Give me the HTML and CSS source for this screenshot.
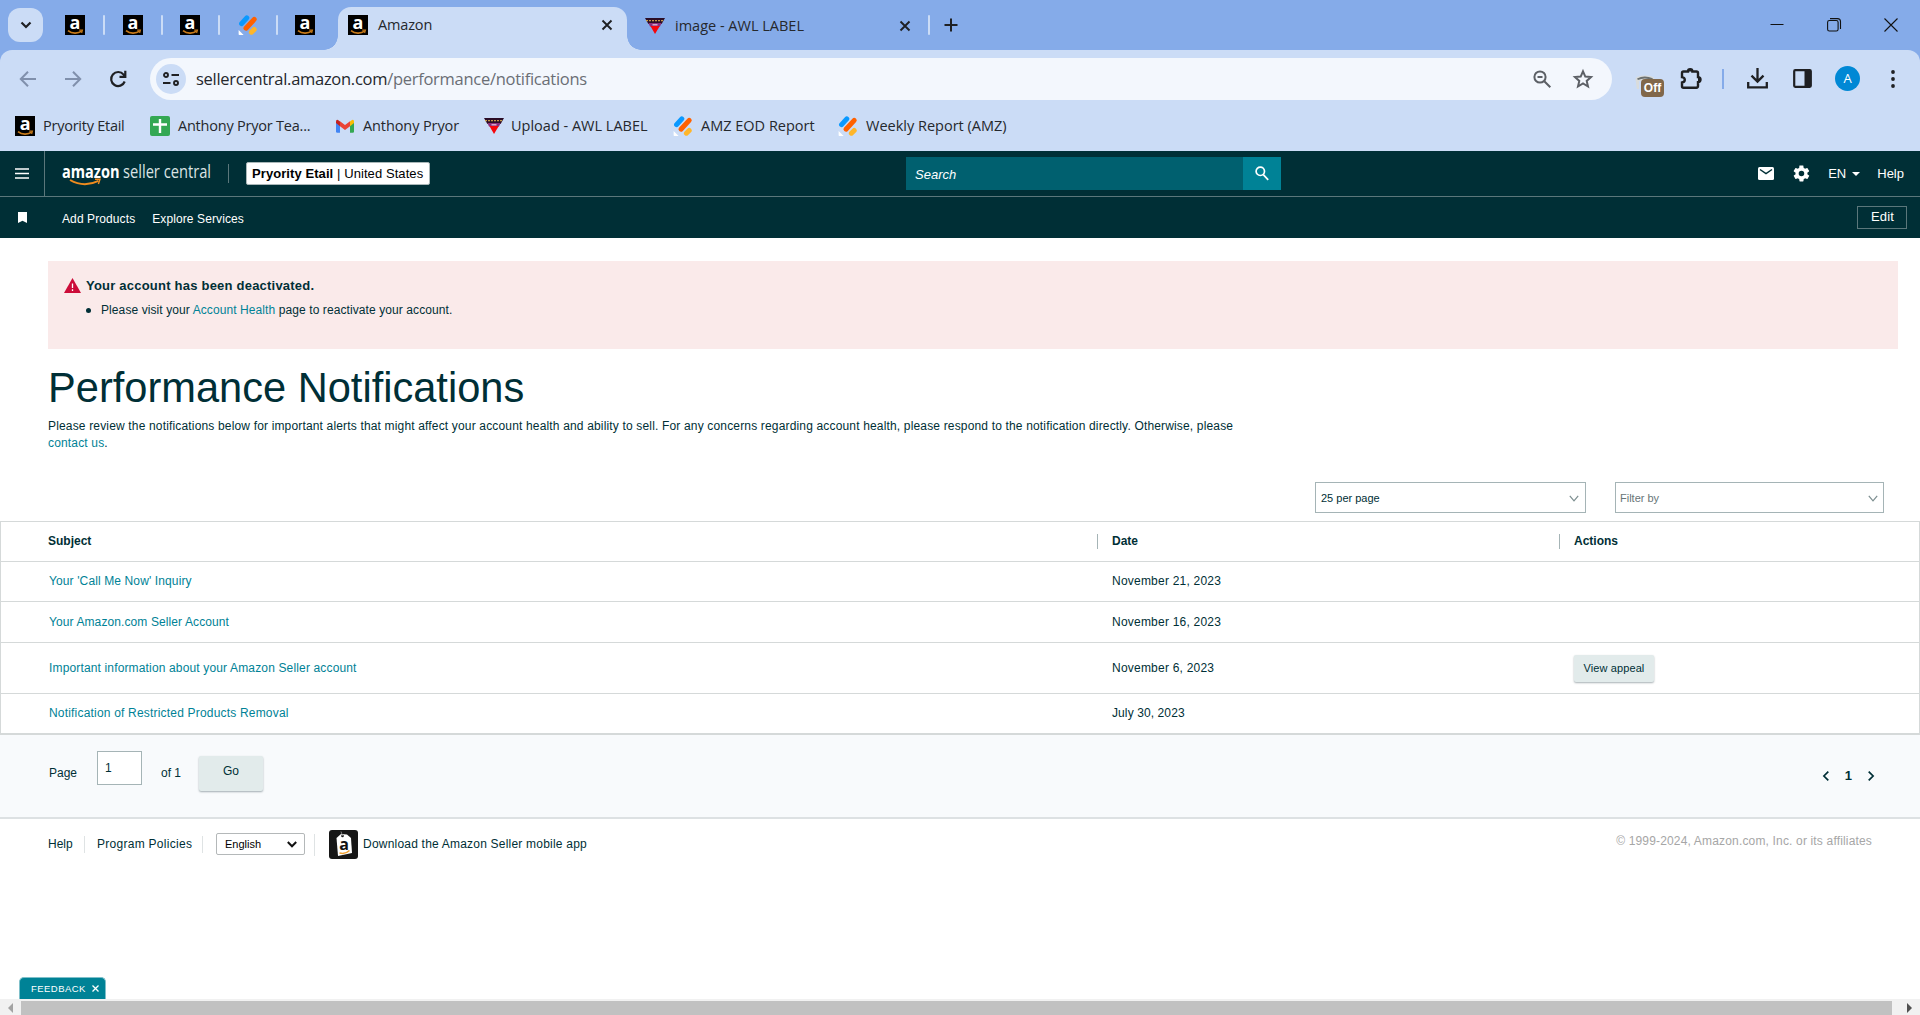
FILE: index.html
```html
<!DOCTYPE html>
<html lang="en">
<head>
<meta charset="utf-8">
<title>Amazon</title>
<link rel="stylesheet" href="styles.css">
</head>
<body>
<svg class="defs" aria-hidden="true">
  <symbol id="fav-amazon" viewBox="0 0 20 20">
    <rect width="20" height="20" fill="#000"/>
    <text x="10" y="14.2" text-anchor="middle" class="fav-letter">a</text>
    <path d="M3 15.600c4 3.200 10 3.200 13.600.5" fill="none" stroke="#c77a1a" stroke-width="1.700"/>
    <path d="M14.200 15.200h3.200l-.8 2.800" fill="none" stroke="#c77a1a" stroke-width="1.200"/>
  </symbol>
  <symbol id="fav-jot" viewBox="0 0 20 20">
    <g fill="none" stroke-linecap="round" stroke-width="5">
      <path d="M3.600 8.600 8.800 2.800" stroke="#0a99ff"/>
      <path d="M8 13.200 16.200 4.400" stroke="#ff6100"/>
      <path d="M13.400 17.200 16.200 14.400" stroke="#ffb629"/>
    </g>
    <path d="M.6 15v4.200q0 .8.8.8h4.200z" fill="#fff"/>
  </symbol>
  <symbol id="fav-awl" viewBox="0 0 20 20">
    <path d="M0 2h20l-3.400 6H3.400z" fill="#2b0d26"/>
    <path d="M1 4.600h18" stroke="#c69a4c" stroke-width="1.400" stroke-dasharray="2 1"/>
    <path d="M3.400 7h13.200L15 10.500H5z" fill="#8a2f7c"/>
    <path d="M5.400 10h9.400L10 18z" fill="#f5060c"/>
    <path d="M7.500 8.800h5" stroke="#e9c6dd" stroke-width="1.200"/>
  </symbol>
  <symbol id="i-x" viewBox="0 0 12 12"><path d="m1.500 1.500 9 9m0-9-9 9" fill="none" stroke="#1f2023" stroke-width="1.900"/></symbol>
</svg>

<header class="browser">
  <div class="tabs">
    <div class="tab-search"><svg width="12" height="8" viewBox="0 0 12 8"><path d="m1.500 1.500 4.500 4.500 4.500-4.500" fill="none" stroke="#1f2023" stroke-width="2.200"/></svg></div>
    <div class="pinned">
      <svg class="fav"><use href="#fav-amazon"/></svg><i class="sep"></i>
      <svg class="fav"><use href="#fav-amazon"/></svg><i class="sep"></i>
      <svg class="fav"><use href="#fav-amazon"/></svg><i class="sep"></i>
      <svg class="fav"><use href="#fav-jot"/></svg><i class="sep"></i>
      <svg class="fav"><use href="#fav-amazon"/></svg>
    </div>
    <div class="tab active">
      <svg class="fav"><use href="#fav-amazon"/></svg><span class="tab-title">Amazon</span>
      <svg class="close"><use href="#i-x"/></svg>
    </div>
    <div class="tab second">
      <svg class="fav"><use href="#fav-awl"/></svg><span class="tab-title">image - AWL LABEL</span>
      <svg class="close"><use href="#i-x"/></svg>
    </div>
    <i class="sep last"></i>
    <svg class="plus" viewBox="0 0 14 14"><path d="M7 .5v13M.5 7h13" stroke="#1f2023" stroke-width="2"/></svg>
    <div class="window-buttons">
      <svg width="14" height="14" viewBox="0 0 14 14"><path d="M.5 6.500h13" stroke="#111" fill="none"/></svg>
      <svg width="14" height="14" viewBox="0 0 14 14"><g fill="none" stroke="#111" stroke-width="1.100"><rect x=".6" y="2.500" width="10.500" height="10.500" rx="1.800"/><path d="M3 .6h7.500q3 0 3 3V11"/></g></svg>
      <svg width="14" height="14" viewBox="0 0 14 14"><path d="m.5.5 13 13m0-13-13 13" stroke="#111" stroke-width="1.100"/></svg>
    </div>
  </div>

  <div class="toolbar">
    <svg class="nav" viewBox="0 0 18 18"><path d="M17 9H2m7-7.200L1.800 9 9 16.200" fill="none" stroke="#8090ac" stroke-width="2"/></svg>
    <svg class="nav" viewBox="0 0 18 18"><path d="M1 9h15M9 1.800 16.200 9 9 16.200" fill="none" stroke="#8090ac" stroke-width="2"/></svg>
    <svg class="nav" viewBox="0 0 18 18"><path d="M15.700 11.500A7 7 0 1 1 14.600 4.600L16 6.500M16.300.8v6H10.500" fill="none" stroke="#1f2023" stroke-width="2.200"/></svg>
    <div class="omnibox">
      <span class="site"><svg width="16" height="14" viewBox="0 0 16 14"><g fill="none" stroke="#1f2023" stroke-width="1.900"><circle cx="3" cy="3" r="2"/><path d="M8.500 3H16M0 11h7.500"/><circle cx="13" cy="11" r="2"/></g></svg></span>
      <span class="url">sellercentral.amazon.com<span class="path">/performance/notifications</span></span>
      <svg class="zoomout" viewBox="0 0 18 18"><g fill="none" stroke="#5c6066" stroke-width="2"><circle cx="7" cy="7" r="5.600"/><path d="m11.300 11.300 6 6M4.500 7h5"/></g></svg>
      <svg class="star" viewBox="0 0 20 20"><path d="m10 2.300 2.300 5.300 5.700.5-4.300 3.800 1.300 5.600-5-3-5 3 1.300-5.600L2 8.100l5.700-.5z" fill="none" stroke="#5c6066" stroke-width="2"/></svg>
    </div>
    <div class="ext">
      <svg width="20" height="15" viewBox="0 0 20 15"><path d="M.5 4Q1 .5 10 .5t9.500 3.500V6H4v8H1.800z" fill="#d9dcdc"/><path d="M2.500 4.200q7-3.400 15 0" stroke="#6b7070" stroke-width="1.800" fill="none"/></svg>
      <span class="off">Off</span>
    </div>
    <svg class="puzzle" viewBox="0 0 22 22"><path d="M2 5q0-1.500 1.500-1.500H8a2.200 2.200 0 0 1 4.400 0h4q1.600 0 1.600 1.600v4a2.500 2.500 0 0 1 0 5v4q0 1.600-1.600 1.600H3.500Q2 19.700 2 18.200v-3.700q2.800-.4 2.800-2.700T2 9.100z" fill="none" stroke="#1f2023" stroke-width="2.400"/><path d="M7.500 3.500a2.700 2.700 0 0 1 5.400 0zM18 9a2.700 2.700 0 0 1 0 5.400z" fill="#1f2023"/></svg>
    <i class="bar"></i>
    <svg class="download" viewBox="0 0 21 21"><path d="M10.500 0v13M4.500 7.600l6 6 6-6M1.200 14v5.400h18.600V14" fill="none" stroke="#1f2023" stroke-width="2.300"/></svg>
    <svg class="panel" viewBox="0 0 19 19"><rect x="1.200" y="1.200" width="16.600" height="16.600" rx="1" fill="none" stroke="#1f2023" stroke-width="2.200"/><path d="M11.500 1h6.500v17h-6.500z" fill="#1f2023"/></svg>
    <span class="avatar">A</span>
    <svg class="dots" viewBox="0 0 4 18"><g fill="#1f2023"><circle cx="2" cy="2" r="1.900"/><circle cx="2" cy="9" r="1.900"/><circle cx="2" cy="16" r="1.900"/></g></svg>
  </div>

  <div class="bookmarks">
    <a class="bm b1"><svg class="fav"><use href="#fav-amazon"/></svg><span>Pryority Etail</span></a>
    <a class="bm b2"><svg class="fav" viewBox="0 0 20 20"><rect width="20" height="20" rx="2" fill="#34a853"/><path d="M10 3v14M3 8.500h14" stroke="#fff" stroke-width="2.400"/></svg><span>Anthony Pryor Tea...</span></a>
    <a class="bm b3"><svg class="fav" viewBox="0 0 20 20"><path d="M1 6v9.500q0 1.200 1.200 1.200H5V8z" fill="#4285f4"/><path d="M19 6v9.500q0 1.200-1.200 1.200H15V8z" fill="#34a853"/><path d="M15 5.500 17 4q2-.8 2 1.800V7l-4 3.200z" fill="#fbbc04"/><path d="M5 5.500 3 4Q1 3.200 1 5.800V7l4 3.200z" fill="#c5221f"/><path d="M5 5.300 10 9l5-3.700v5L10 14l-5-3.700z" fill="#ea4335"/></svg><span>Anthony Pryor</span></a>
    <a class="bm b4"><svg class="fav"><use href="#fav-awl"/></svg><span>Upload - AWL LABEL</span></a>
    <a class="bm b5"><svg class="fav"><use href="#fav-jot"/></svg><span>AMZ EOD Report</span></a>
    <a class="bm b6"><svg class="fav"><use href="#fav-jot"/></svg><span>Weekly Report (AMZ)</span></a>
  </div>
</header>

<nav class="sc-top">
  <div class="menu"><svg width="14" height="11" viewBox="0 0 14 11"><path d="M0 1h14M0 5.500h14M0 10h14" stroke="#fff" stroke-width="1.600"/></svg></div>
  <svg class="logo" width="150" height="28" viewBox="0 0 150 28">
    <text x="0" y="18" class="logo-b" textLength="57.500" lengthAdjust="spacingAndGlyphs">amazon</text>
    <text x="61" y="18" class="logo-l" textLength="88" lengthAdjust="spacingAndGlyphs">seller central</text>
    <path d="M8 20q14 8 28.500.8" fill="none" stroke="#f08c1e" stroke-width="2"/><path d="M33 19.300h5l-1.600 4.600" fill="none" stroke="#f08c1e" stroke-width="1.400"/>
  </svg>
  <i class="vline"></i>
  <div class="account"><b>Pryority Etail</b><span>&nbsp;| United States</span></div>
  <div class="search"><span class="search-text">Search</span><span class="search-btn"><svg width="14" height="15" viewBox="0 0 14 15"><g fill="none" stroke="#fff" stroke-width="1.700"><circle cx="5.300" cy="5.300" r="4.200"/><path d="m8.300 8.600 4.900 5.200"/></g></svg></span></div>
  <div class="top-right">
    <svg class="mail" width="16" height="13" viewBox="0 0 16 13"><rect width="16" height="13" rx="1.500" fill="#fff"/><path d="m2 2.500 6 4.200 6-4.200" fill="none" stroke="#002f36" stroke-width="1.500"/></svg>
    <svg class="gear" width="17" height="17" viewBox="0 0 24 24"><path fill="#fff" d="M19.400 13c0-.3.100-.6.100-1s0-.7-.1-1l2.100-1.600c.2-.2.300-.4.100-.7l-2-3.400c-.1-.2-.4-.3-.6-.2l-2.500 1c-.5-.4-1.100-.7-1.700-1l-.4-2.600c0-.3-.2-.5-.5-.5h-4c-.2 0-.4.200-.5.400L9.100 5.100c-.6.300-1.200.6-1.700 1l-2.500-1c-.2-.1-.5 0-.6.200l-2 3.400c-.1.300-.1.500.1.700L4.600 11c-.1.300-.1.700-.1 1s0 .7.100 1l-2.200 1.600c-.2.200-.2.400-.1.700l2 3.400c.1.200.4.300.6.200l2.500-1c.5.400 1.100.7 1.700 1l.4 2.600c0 .3.200.5.500.5h4c.3 0 .5-.2.500-.5l.4-2.600c.6-.3 1.200-.6 1.700-1l2.500 1c.2.100.5 0 .6-.2l2-3.400c.1-.3.100-.5-.1-.7zM12 15.500a3.500 3.500 0 1 1 0-7 3.500 3.500 0 0 1 0 7z" transform="translate(-1.500 -1.500) scale(1.120)"/></svg>
    <span class="en">EN</span><i class="caret"></i><span class="help">Help</span>
  </div>
</nav>
<nav class="sc-sub">
  <svg class="ribbon" width="9" height="11" viewBox="0 0 9 11"><path d="M0 0h9v11L4.500 8.800 0 11z" fill="#fff"/></svg>
  <a class="add">Add Products</a><a class="explore">Explore Services</a>
  <a class="edit">Edit</a>
</nav>

<main>
  <section class="alert">
    <div class="alert-head"><svg width="17" height="15" viewBox="0 0 17 15"><path d="M8.500 0 17 15H0z" fill="#cc0c39"/><path d="M8.500 5.500v4.500M8.500 11.300v1.700" stroke="#fff" stroke-width="1.300"/></svg><b>Your account has been deactivated.</b></div>
    <div class="alert-item"><i class="bullet"></i><span>Please visit your <a>Account Health</a> page to reactivate your account.</span></div>
  </section>
  <h1>Performance Notifications</h1>
  <p class="intro">Please review the notifications below for important alerts that might affect your account health and ability to sell. For any concerns regarding account health, please respond to the notification directly. Otherwise, please<br><a>contact us</a>.</p>
  <div class="filters">
    <div class="dropdown d1"><span>25 per page</span><svg width="10" height="7" viewBox="0 0 10 7"><path d="m.8.8 4.200 5 4.200-5" fill="none" stroke="#7b8d8f" stroke-width="1.200"/></svg></div>
    <div class="dropdown d2"><span>Filter by</span><svg width="10" height="7" viewBox="0 0 10 7"><path d="m.8.8 4.200 5 4.200-5" fill="none" stroke="#7b8d8f" stroke-width="1.200"/></svg></div>
  </div>
  <div class="table">
    <div class="row head"><b class="subject">Subject</b><b class="col">Date</b><b class="col">Actions</b></div>
    <div class="row r1"><a>Your 'Call Me Now' Inquiry</a><span class="date">November 21, 2023</span></div>
    <div class="row r2"><a>Your Amazon.com Seller Account</a><span class="date">November 16, 2023</span></div>
    <div class="row r3"><a>Important information about your Amazon Seller account</a><span class="date">November 6, 2023</span><span class="appeal">View appeal</span></div>
    <div class="row r4"><a>Notification of Restricted Products Removal</a><span class="date july">July 30, 2023</span></div>
  </div>
  <div class="pager">
    <span class="page-label">Page</span><span class="page-input">1</span><span class="of">of 1</span><span class="go">Go</span>
    <div class="pages">
      <svg width="6" height="10" viewBox="0 0 6 10"><path d="M5.300.6.900 5l4.400 4.400" fill="none" stroke="#002f36" stroke-width="1.700"/></svg>
      <b>1</b>
      <svg width="6" height="10" viewBox="0 0 6 10"><path d="M.7.6 5.100 5 .7 9.400" fill="none" stroke="#002f36" stroke-width="1.700"/></svg>
    </div>
  </div>
  <footer class="footer">
    <span class="f-help">Help</span><i class="fsep"></i><span class="policies">Program Policies</span><i class="fsep"></i>
    <div class="lang"><span>English</span><svg width="10" height="7" viewBox="0 0 10 7"><path d="m.8 1 4.200 4.300L9.200 1" fill="none" stroke="#111" stroke-width="2"/></svg></div>
    <i class="fsep tall"></i>
    <svg class="app" width="29" height="29" viewBox="0 0 29 29"><rect width="29" height="29" rx="3" fill="#161616"/><path d="m7.500 8 4.500-4 6 .5 4 3.500 1 15-14 3z" fill="#fff"/><circle cx="13.500" cy="6" r="1.300" fill="#161616"/><path d="M13.500 6 12 1.500" stroke="#999" stroke-width=".8"/><text x="15" y="20" text-anchor="middle" class="app-letter">a</text><path d="M10.500 23q6 1.500 10-2.500" fill="none" stroke="#f0a030" stroke-width="1.500"/></svg>
    <span class="dl">Download the Amazon Seller mobile app</span>
    <span class="copy">© 1999-2024, Amazon.com, Inc. or its affiliates</span>
  </footer>
</main>
<div class="bottom">
  <div class="feedback"><span>FEEDBACK</span><svg width="7" height="7" viewBox="0 0 7 7"><path d="m.5.5 6 6m0-6-6 6" stroke="#fff" stroke-width="1.300"/></svg></div>
  <div class="scrollbar"><i class="left"></i><span class="thumb"></span><i class="right"></i></div>
</div>
</body>
</html>
```
FILE: styles.css
```css
* { box-sizing: border-box; }
html, body { margin: 0; height: 100%; overflow: hidden; }
body { width: 1920px; height: 1015px; display: flex; flex-direction: column; background: #fff; color: #002f36; font: 12px/17px "Liberation Sans", Arial, sans-serif; }
svg { display: block; flex: none; overflow: visible; }
i { display: block; flex: none; }
span, b, a { white-space: nowrap; }
.defs { display: none; }
.fav { width: 20px; height: 20px; }
.fav-letter { font: bold 18px "Open Sans", sans-serif; fill: #fff; }

/* Browser chrome */
.browser { flex: none; height: 151px; background: #85abe9; font-family: "Open Sans", "Noto Sans", sans-serif; color: #25282d; }
.tabs { height: 50px; display: flex; align-items: center; }
.tab-search { margin-left: 8px; width: 35px; height: 34px; border-radius: 12px; background: #cbdcf6; display: flex; align-items: center; justify-content: center; }
.pinned { display: flex; align-items: center; margin-left: 22px; width: 273px; }
.sep { width: 2px; height: 20px; margin: 0 17.500px 0 18px; background: #cbdcf6; border-radius: 1px; }
.tab { display: flex; align-items: center; height: 42px; align-self: flex-end; padding: 0 0 7px 10px; position: relative; }
.tab.active { width: 289px; height: 43px; background: #cbdcf6; border-radius: 13px 13px 0 0; }
.tab.active::before, .tab.active::after { content: ""; position: absolute; bottom: 0; width: 14px; height: 14px; }
.tab.active::before { left: -14px; background: radial-gradient(circle at 0 0, transparent 13.500px, #cbdcf6 14px); }
.tab.active::after { right: -14px; background: radial-gradient(circle at 100% 0, transparent 13.500px, #cbdcf6 14px); }
.tab-title { margin-left: 10px; font-size: 14.500px; line-height: 20px; }
.active .tab-title { letter-spacing: -.15px; }
.close { width: 12px; height: 12px; margin-left: auto; margin-right: 14px; }
.tab.second { width: 301px; padding-left: 18px; }
.tab.second .close { margin-right: 17px; }
.sep.last { margin: 0; }
.plus { width: 14px; height: 14px; margin-left: 14px; }
.window-buttons { display: flex; gap: 43px; margin-left: auto; margin-right: 22px; }
.toolbar { height: 57px; background: #cbdcf6; border-radius: 12px 12px 0 0; display: flex; align-items: center; padding-left: 19px; }
.nav { width: 18px; height: 18px; margin-right: 27px; }
.nav:nth-child(3) { margin-right: 23px; }
.omnibox { width: 1462px; height: 42px; border-radius: 21px; background: #f3f7fd; display: flex; align-items: center; padding-left: 6px; }
.site { width: 30px; height: 30px; border-radius: 50%; background: #cbdcf6; display: flex; align-items: center; justify-content: center; }
.url { margin-left: 10px; padding-top: 1px; font-size: 16.500px; letter-spacing: -.28px; line-height: 24px; flex: 1; }
.path { color: #6a6e75; }
.zoomout { width: 18px; height: 18px; margin-right: 22px; }
.star { width: 20px; height: 20px; margin-right: 19px; }
.ext { position: relative; width: 28px; height: 26px; margin-left: 23px; padding-top: 9px; }
.off { position: absolute; left: 6px; top: 13px; width: 23px; height: 18px; border-radius: 4px; background: #80674a; color: #fff; font: bold 12px/19px "Liberation Sans", Arial, sans-serif; text-align: center; }
.puzzle { width: 22px; height: 22px; margin-left: 17px; }
.bar { width: 2px; height: 20px; background: #85abe9; margin-left: 20px; }
.download { width: 21px; height: 21px; margin-left: 23px; }
.panel { width: 19px; height: 19px; margin-left: 25px; }
.avatar { width: 25px; height: 25px; border-radius: 50%; background: #0088d5; color: #fff; font-size: 13px; line-height: 25px; text-align: center; margin-left: 23px; }
.dots { width: 4px; height: 18px; margin-left: 31px; }
.bookmarks { height: 44px; background: #cbdcf6; display: flex; align-items: flex-start; padding: 9px 0 0 15px; }
.bm { display: flex; align-items: center; height: 20px; font-size: 14.500px; line-height: 20px; gap: 8px; }
.b1 { width: 135px; letter-spacing: -.25px; }
.b2 { width: 185px; letter-spacing: -.22px; }
.b3 { width: 149px; letter-spacing: -.1px; }
.b4 { width: 189px; gap: 7px; }
.b5 { width: 165px; }

/* Seller Central bars */
.sc-top { flex: none; height: 46px; background: #002f36; border-bottom: 1px solid #5b777b; display: flex; align-items: center; color: #fff; font-size: 13px; }
.menu { width: 45px; height: 45px; border-right: 1px solid #5b777b; display: flex; align-items: center; justify-content: center; padding-right: 1px; }
.logo { margin-left: 17px; }
.logo-b { font: bold 18.500px "Open Sans", sans-serif; fill: #fff; }
.logo-l { font: 18.500px "Open Sans", sans-serif; fill: #dbe3e4; }
.vline { width: 1px; height: 19px; background: #5b777b; margin-left: 16px; }
.account { margin-left: 17px; width: 184px; height: 23px; border: 1px solid #aab7b8; border-radius: 2px; background: #fff; color: #000; padding-left: 5px; line-height: 22px; display: flex; letter-spacing: .08px; }
.search { display: flex; margin-left: 476px; width: 375px; height: 33px; background: #00606f; }
.search-text { flex: 1; padding-left: 9px; line-height: 35px; font-style: italic; }
.search-btn { width: 38px; background: #008296; display: flex; align-items: center; justify-content: center; }
.top-right { display: flex; align-items: center; margin-left: auto; margin-right: 16px; }
.mail { margin-right: 19px; }
.gear { margin-right: 18px; }
.caret { border: 4px solid transparent; border-top-color: #fff; border-bottom: 0; margin: 0 17px 0 6px; }
.sc-sub { flex: none; height: 41px; background: #002f36; color: #fff; display: flex; align-items: center; font-size: 12px; letter-spacing: .1px; }
.ribbon { margin-left: 18px; }
.add { margin-left: 35px; padding-top: 4px; }
.explore { margin-left: 17px; padding-top: 4px; }
.edit { margin-left: auto; margin-right: 13px; width: 50px; height: 23px; border: 1px solid #5b777b; text-align: center; font-size: 13px; line-height: 20px; margin-bottom: 1px; padding-left: 1px; }

/* Page body */
main { flex: 1; display: flex; flex-direction: column; min-height: 0; }
main a { color: #008296; }
.alert { flex: none; margin: 23px 22px 0 48px; height: 88px; background: #faeaea; padding: 15px 0 0 16px; }
.alert-head { display: flex; align-items: center; gap: 5px; font-size: 13px; letter-spacing: .22px; height: 18px; }
.alert-item { display: flex; align-items: center; height: 17px; margin-top: 8px; padding-left: 22px; letter-spacing: .09px; }
.bullet { width: 5px; height: 5px; border-radius: 50%; background: #002f36; margin-right: 10px; }
h1 { flex: none; margin: 16px 0 0 48px; font-weight: 400; font-size: 41.600px; line-height: 46px; height: 46px; white-space: nowrap; }
.intro { flex: none; margin: 7px 0 0 48px; height: 64px; letter-spacing: .163px; white-space: nowrap; }
.filters { flex: none; display: flex; margin-left: 1315px; height: 39px; }
.dropdown { height: 31px; border: 1px solid #a5b4b6; display: flex; align-items: center; justify-content: space-between; padding: 1px 6px 0 5px; font-size: 11px; }
.d1 { width: 271px; }
.d2 { width: 269px; margin-left: 29px; padding-left: 4px; padding-right: 5px; color: #687577; }
.table { flex: none; border: 1px solid #d5d9d9; border-bottom: 0; }
.row { display: grid; grid-template-columns: 1063px 462px auto; align-items: center; padding-left: 48px; border-bottom: 1px solid #d5d9d9; height: 40px; }
.row.r2 { height: 41px; }
.row.r3 { height: 51px; }
.row.r4 { height: 41px; border-bottom-width: 2px; }
.subject { margin-left: -1px; }
.r1 a { letter-spacing: .12px; }
.r2 a { letter-spacing: .1px; }
.r3 a { letter-spacing: .15px; }
.r4 a { letter-spacing: .19px; }
.date { letter-spacing: .22px; }
.july { letter-spacing: .1px; }
.col { position: relative; }
.col::before { content: ""; position: absolute; left: -15px; top: 1px; width: 1px; height: 15px; background: #a5b4b6; }
.appeal { justify-self: start; width: 80px; height: 27px; border-radius: 2px; background: #e2ebeb; box-shadow: 0 1px 2px rgba(0,30,40,.35); text-align: center; line-height: 27px; font-size: 11px; letter-spacing: .1px; }
.pager { flex: none; height: 84px; background: #f8fafc; border-bottom: 2px solid #dde1e3; display: flex; align-items: flex-start; }
.page-label { margin: 30px 0 0 49px; width: 48px; }
.page-input { margin-top: 16px; width: 45px; height: 34px; border: 1px solid #a5b4b6; background: #fff; padding-left: 7px; line-height: 32px; }
.of { margin: 30px 0 0 19px; width: 38px; }
.go { margin-top: 21px; width: 64px; height: 35px; border-radius: 2px; background: #e2ebeb; box-shadow: 0 1px 2px rgba(0,30,40,.35); text-align: center; line-height: 31px; }
.pages { display: flex; align-items: center; margin: 32px 46px 0 auto; height: 17px; font-size: 13px; gap: 16px; }
.footer { flex: none; height: 51px; display: flex; align-items: center; padding-left: 48px; }
.fsep { width: 1px; height: 17px; background: #dfe3e4; }
.fsep.tall { height: 22px; }
.f-help { width: 36px; }
.policies { margin-left: 12px; width: 105px; letter-spacing: .28px; }
.lang { margin: -1px 9px 0 13px; width: 89px; height: 22px; border: 1px solid #b4b8b9; border-radius: 2px; display: flex; align-items: center; justify-content: space-between; padding: 1px 7px 0 8px; color: #000; font-size: 11px; }
.app { margin-left: 14px; }
.app-letter { font: bold 16px "Open Sans", sans-serif; fill: #111; }
.dl { margin-left: 5px; letter-spacing: .21px; }
.copy { margin-left: auto; margin-right: 48px; color: #a6a6a6; margin-bottom: 6px; letter-spacing: .165px; }
.bottom { flex: none; }
.feedback { margin-left: 19px; width: 87px; height: 22px; background: #008296; border: 1px solid #7fc0ca; border-bottom: 0; border-radius: 5px 5px 0 0; color: #fff; font-size: 9.500px; letter-spacing: .45px; display: flex; align-items: center; justify-content: space-between; padding: 0 6px 0 11px; }
.scrollbar { height: 16px; background: #f1f1f1; display: flex; align-items: center; padding-top: 2px; }
.left { margin-left: 8px; border: 5px solid transparent; border-right-color: #a3a3a3; border-left: 0; }
.thumb { margin-left: 8px; width: 1871px; height: 14px; background: #c1c1c1; }
.right { margin-left: 15px; border: 5px solid transparent; border-left-color: #505050; border-right: 0; }
```
